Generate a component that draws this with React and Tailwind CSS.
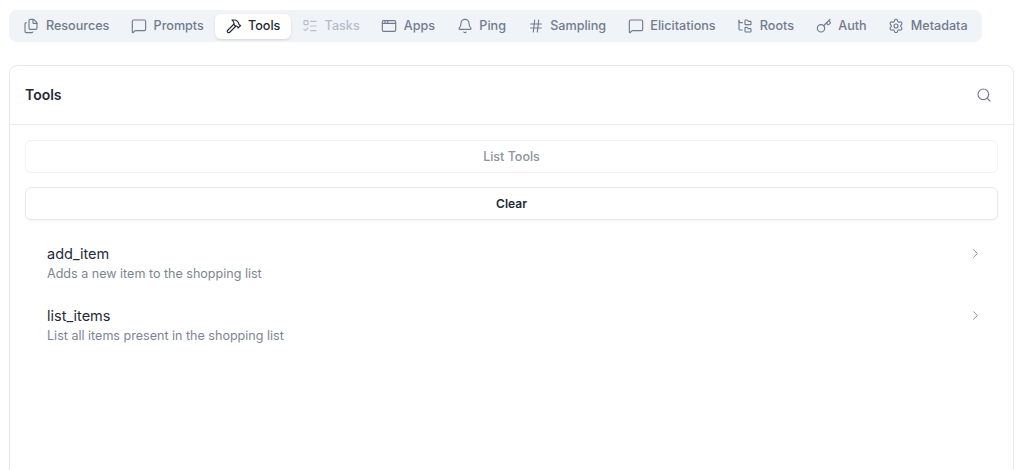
import React from "react";
import {
  Files,
  MessageSquare,
  Hammer,
  ListTodo,
  AppWindow,
  Bell,
  Hash,
  FolderTree,
  Key,
  Settings,
  Search,
  ChevronRight,
} from "lucide-react";

const TABS = [
  { label: "Resources", icon: Files },
  { label: "Prompts", icon: MessageSquare },
  { label: "Tools", icon: Hammer, active: true },
  { label: "Tasks", icon: ListTodo, disabled: true },
  { label: "Apps", icon: AppWindow },
  { label: "Ping", icon: Bell },
  { label: "Sampling", icon: Hash },
  { label: "Elicitations", icon: MessageSquare },
  { label: "Roots", icon: FolderTree },
  { label: "Auth", icon: Key },
  { label: "Metadata", icon: Settings },
];

const TOOLS = [
  { name: "add_item", description: "Adds a new item to the shopping list" },
  { name: "list_items", description: "List all items present in the shopping list" },
];

function Tab({ label, icon: Icon, active, disabled }) {
  let color = "text-[#707b8e]";
  if (active) color = "text-[#1f2937] bg-white rounded-md shadow-sm";
  if (disabled) color = "text-[#b6bdc9]";

  return (
    <div className={`flex items-center gap-[6.5px] h-[25px] px-[10.85px] text-[12.6px] font-medium ${color}`}>
      <Icon size={16} strokeWidth={1.7} />
      <span>{label}</span>
    </div>
  );
}

export default function App() {
  return (
    <div className="w-[1024px] h-[470px] overflow-hidden bg-white pt-[10px] pl-[9px] font-['Inter',sans-serif]">
      <div className="inline-flex items-center h-8 pl-[3.6px] pr-[4px] rounded-lg bg-[#f0f3f8]">
        {TABS.map((tab) => (
          <Tab key={tab.label} {...tab} />
        ))}
      </div>

      <div className="mt-[23px] w-[1005px] h-[500px] rounded-lg border border-[#e6e9f0] bg-white">
        <div className="flex items-center justify-between h-[59px] pl-[15px] pr-[21px] border-b border-[#e9ecf2]">
          <h2 className="text-sm font-semibold text-[#1f2937]">Tools</h2>
          <Search size={16} strokeWidth={1.7} className="text-[#707b8e] mb-[1px]" />
        </div>

        <div className="px-[15px] pt-[15px]">
          <button className="block w-full h-[33px] pt-[1px] rounded-md border border-[#f0f2f6] bg-white text-[12.5px] font-medium text-[#8b93a1]">
            List Tools
          </button>
          <button className="block w-full h-[33px] mt-[14px] rounded-md border border-[#e6e9f0] bg-white text-[12px] font-semibold text-[#1f2937] shadow-xs">
            Clear
          </button>

          <div className="mt-[23.5px]">
            {TOOLS.map((tool) => (
              <div key={tool.name} className="flex items-start justify-between h-[62.5px] pl-[22px] pr-[15px]">
                <div>
                  <div className="text-[14.5px] leading-[20px] text-[#1f2937]">{tool.name}</div>
                  <div className="text-[12.55px] leading-[20px] text-[#7c8594]">{tool.description}</div>
                </div>
                <ChevronRight size={15} strokeWidth={1.6} className="text-[#858e9c] mt-[2px]" />
              </div>
            ))}
          </div>
        </div>
      </div>
    </div>
  );
}
